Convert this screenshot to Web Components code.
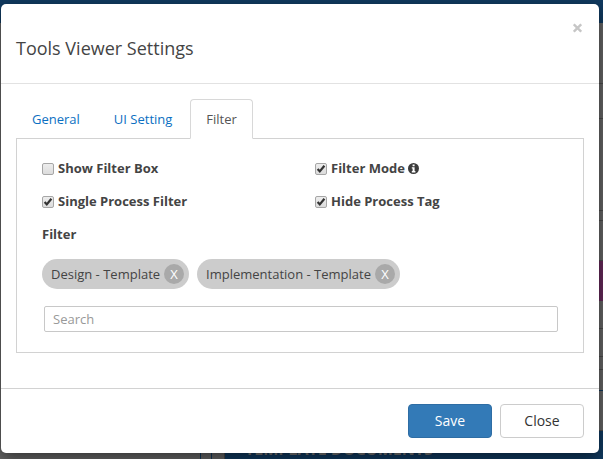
<!DOCTYPE html>
<html lang="en">
<head>
<meta charset="utf-8">
<title>Tools Viewer Settings</title>
<style>
    body {
        margin: 0;
        min-height: 100vh;
        position: relative;
        overflow: hidden;
        background: #666;
        color: #444;
        font: 13px/20px "Open Sans", "Liberation Sans", sans-serif;
    }

    /* the dialog floats over the dimmed page */
    settings-modal {
        position: absolute;
        inset: 4px 4px auto 1px;
    }
</style>
</head>
<body>
    <tools-page>
        <span slot="heading">TEMPLATE DOCUMENTS</span>
    </tools-page>

    <settings-modal>
        <span slot="title">Tools Viewer Settings</span>
        <tab-panel>
            <tab-link slot="tabs">General</tab-link>
            <tab-link slot="tabs">UI Setting</tab-link>
            <tab-link slot="tabs" active>Filter</tab-link>
            <filter-form>
                <check-option slot="options">Show Filter Box</check-option>
                <check-option slot="options" checked>Filter Mode <info-icon></info-icon></check-option>
                <check-option slot="options" checked>Single Process Filter</check-option>
                <check-option slot="options" checked>Hide Process Tag</check-option>
                <filter-chip slot="chips">Design - Template</filter-chip>
                <filter-chip slot="chips">Implementation - Template</filter-chip>
            </filter-form>
        </tab-panel>
        <modal-button slot="actions" primary>Save</modal-button>
        <modal-button slot="actions">Close</modal-button>
    </settings-modal>

<script>
    class BaseElement extends HTMLElement {
        constructor() {
            super();
            this.attachShadow({ mode: 'open' });
            this.shadowRoot.innerHTML = this.template();
        }
    }

    class ToolsPage extends BaseElement {
        template() {
            return /* html */`
                <style>
                    :host {
                        display: flex;
                        flex-direction: column;
                        height: 100vh;
                    }

                    header {
                        flex: none;
                        height: 23px;
                        background: #103a60;
                    }

                    .columns {
                        flex: 1;
                        display: grid;
                        grid-template-columns: 201px 11px 13px 1fr;
                    }

                    .columns > div {
                        border-right: 1px solid #12385a;
                    }

                    .columns > .gutter {
                        border-right: 1px solid #484848;
                    }

                    main {
                        display: flex;
                        flex-direction: column;
                    }

                    .row {
                        flex: none;
                        box-sizing: border-box;
                        border-bottom: 1px solid #4c4c4c;
                    }

                    .h61 { height: 61px; }
                    .h35 { height: 35px; }
                    .h92 { height: 92px; }
                    .h10 { height: 10px; }
                    .h40 { height: 40px; }
                    .h28 { height: 28px; }
                    .h13 { height: 13px; }
                    .h21 { height: 21px; }

                    .accent {
                        border: 0;
                        background: #66295a;
                    }

                    .blue {
                        border-color: #12385a;
                    }

                    h2 {
                        flex: 1;
                        margin: 0;
                        padding: 8px 20px 0;
                        background: #103a60;
                        color: #777;
                        font-size: 16px;
                        line-height: 20px;
                    }
                </style>
                <header></header>
                <div class="columns">
                    <div></div>
                    <div></div>
                    <div class="gutter"></div>
                    <main>
                        <div class="row h61"></div>
                        <div class="row h35"></div>
                        <div class="row h92"></div>
                        <div class="row h10"></div>
                        <div class="row h40"></div>
                        <div class="row accent h40"></div>
                        <div class="row h28"></div>
                        <div class="row h28"></div>
                        <div class="row h13"></div>
                        <div class="row blue h21"></div>
                        <div class="row h40"></div>
                        <h2><slot name="heading"></slot></h2>
                    </main>
                </div>
            `;
        }
    }

    class SettingsModal extends BaseElement {
        template() {
            return /* html */`
                <style>
                    :host {
                        display: block;
                        border-radius: 5px;
                        background: #fff;
                        box-shadow: 0 5px 15px rgba(0, 0, 0, 0.5);
                    }

                    header {
                        display: flex;
                        flex-direction: column;
                        padding: 15px 15px 24px;
                        border-bottom: 1px solid #e2e2e2;
                    }

                    .close {
                        align-self: flex-end;
                        display: flex;
                        padding: 4px 2px;
                        border: 0;
                        background: none;
                    }

                    h1 {
                        margin: 0;
                        font-size: 18px;
                        font-weight: 400;
                        line-height: 22px;
                    }

                    section {
                        padding: 15px 15px 35px;
                    }

                    footer {
                        display: flex;
                        justify-content: flex-end;
                        gap: 8px;
                        padding: 15px;
                        border-top: 1px solid #d2d2d2;
                    }
                </style>
                <header>
                    <button class="close" type="button" aria-label="Close dialog">
                        <svg width="9" height="10" viewBox="0 0 9 10" stroke="#c6c6c6" stroke-width="2.4">
                            <path d="M.8 1.3l7.4 7.4M8.2 1.3L.8 8.7"/>
                        </svg>
                    </button>
                    <h1><slot name="title"></slot></h1>
                </header>
                <section><slot></slot></section>
                <footer><slot name="actions"></slot></footer>
            `;
        }
    }

    class TabPanel extends BaseElement {
        template() {
            return /* html */`
                <style>
                    :host {
                        display: block;
                    }

                    nav {
                        display: flex;
                        gap: 2px;
                        border-bottom: 1px solid #d2d2d2;
                    }

                    .panel {
                        padding: 19px 25px 20px;
                        border: 1px solid #d2d2d2;
                        border-top: 0;
                    }
                </style>
                <nav><slot name="tabs"></slot></nav>
                <div class="panel"><slot></slot></div>
            `;
        }
    }

    class TabLink extends BaseElement {
        template() {
            return /* html */`
                <style>
                    :host {
                        display: block;
                        margin-bottom: -1px;
                    }

                    a {
                        display: block;
                        padding: 9px 15px;
                        border: 1px solid transparent;
                        border-radius: 4px 4px 0 0;
                        color: #0b6fc2;
                        text-decoration: none;
                    }

                    :host([active]) a {
                        border-color: #d8d8d8 #d8d8d8 #fff;
                        background: #fff;
                        color: #555;
                    }
                </style>
                <a href="#"><slot></slot></a>
            `;
        }
    }

    class FilterForm extends BaseElement {
        template() {
            return /* html */`
                <style>
                    :host {
                        display: block;
                    }

                    .options {
                        display: grid;
                        grid-template-columns: 1fr 1fr;
                        gap: 13px 30px;
                    }

                    label {
                        display: block;
                        margin: 13px 0 15px;
                        font-weight: 700;
                    }

                    .chips {
                        display: flex;
                        flex-wrap: wrap;
                        gap: 8px;
                    }

                    .search {
                        padding-left: 2px;
                        margin-top: 17px;
                    }

                    input {
                        display: block;
                        box-sizing: border-box;
                        width: 100%;
                        height: 26px;
                        padding: 0 8px;
                        border: 1px solid #c8c8c8;
                        border-radius: 2px;
                        background: #fff;
                        color: #444;
                        font: inherit;
                    }

                    input::placeholder {
                        color: #999;
                    }
                </style>
                <div class="options"><slot name="options"></slot></div>
                <label for="search">Filter</label>
                <div class="chips"><slot name="chips"></slot></div>
                <div class="search"><input id="search" type="text" placeholder="Search"></div>
            `;
        }
    }

    class CheckOption extends BaseElement {
        template() {
            return /* html */`
                <style>
                    :host {
                        display: block;
                    }

                    label {
                        display: flex;
                        align-items: center;
                        gap: 4px;
                        font-weight: 700;
                    }

                    .box {
                        display: grid;
                    }

                    input, svg {
                        grid-area: 1 / 1;
                        width: 12px;
                        height: 12px;
                        margin: 1px 0 0;
                    }

                    input {
                        appearance: none;
                        box-sizing: border-box;
                        border: 1px solid #a6a6a6;
                        border-radius: 2px;
                        background: linear-gradient(#ededed, #dcdcdc);
                    }

                    svg {
                        visibility: hidden;
                        pointer-events: none;
                    }

                    input:checked + svg {
                        visibility: visible;
                    }
                </style>
                <label>
                    <span class="box">
                        <input type="checkbox">
                        <svg viewBox="0 0 12 12" fill="none" stroke="#333" stroke-width="2.2">
                            <path d="M2.6 6l2.2 2.4L9.4 2.8"/>
                        </svg>
                    </span>
                    <span><slot></slot></span>
                </label>
            `;
        }

        connectedCallback() {
            this.shadowRoot.querySelector('input').checked = this.hasAttribute('checked');
        }
    }

    class InfoIcon extends BaseElement {
        template() {
            return /* html */`
                <style>
                    :host {
                        display: inline-block;
                        vertical-align: middle;
                    }

                    svg {
                        display: block;
                        margin-bottom: 2px;
                    }
                </style>
                <svg width="11" height="11" viewBox="0 0 11 11">
                    <circle cx="5.5" cy="5.5" r="5.5" fill="#3c3c3c"/>
                    <path fill="#fff" d="M4.6 1.6h2v1.7h-2zM3.8 4.3h2.8v3.8h.8v1.3H3.8V8.1h.8V5.5h-.8z"/>
                </svg>
            `;
        }
    }

    class FilterChip extends BaseElement {
        template() {
            return /* html */`
                <style>
                    :host {
                        display: flex;
                        align-items: center;
                        gap: 4px;
                        padding: 5px 5px 5px 9px;
                        border-radius: 15px;
                        background: #ccc;
                    }

                    button {
                        width: 20px;
                        height: 20px;
                        padding: 0;
                        border: 0;
                        border-radius: 50%;
                        background: #a9a9a9;
                        color: #fff;
                        font: inherit;
                    }
                </style>
                <span><slot></slot></span>
                <button type="button">X</button>
            `;
        }
    }

    class ModalButton extends BaseElement {
        template() {
            return /* html */`
                <style>
                    :host {
                        display: block;
                    }

                    button {
                        min-width: 84px;
                        padding: 6px 12px;
                        border: 1px solid #ccc;
                        border-radius: 4px;
                        background: #fff;
                        color: #333;
                        font: inherit;
                        font-size: 14px;
                        line-height: 20px;
                    }

                    :host([primary]) button {
                        border-color: #2e6da4;
                        background: #337ab7;
                        color: #fff;
                    }
                </style>
                <button type="button"><slot></slot></button>
            `;
        }
    }

    customElements.define("tools-page", ToolsPage);
    customElements.define("settings-modal", SettingsModal);
    customElements.define("tab-panel", TabPanel);
    customElements.define("tab-link", TabLink);
    customElements.define("filter-form", FilterForm);
    customElements.define("check-option", CheckOption);
    customElements.define("info-icon", InfoIcon);
    customElements.define("filter-chip", FilterChip);
    customElements.define("modal-button", ModalButton);
</script>
</body>
</html>
